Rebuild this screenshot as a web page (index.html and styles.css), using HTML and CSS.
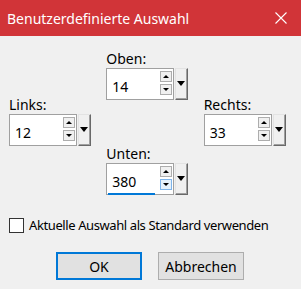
FILE: index.html
```html
<!DOCTYPE html>
<html lang="de">
<head>
    <meta charset="UTF-8">
    <title>Benutzerdefinierte Auswahl</title>
    <link rel="stylesheet" href="styles.css">
</head>
<body>
    <div class="titlebar">
        <span class="title">Benutzerdefinierte Auswahl</span>
        <span class="close">
            <svg width="12" height="12" viewBox="0 0 12 12"><path d="M0.5 0.5 L11.5 11.5 M11.5 0.5 L0.5 11.5" stroke="#fff" stroke-width="1.1" fill="none"/></svg>
        </span>
    </div>

    <!-- Ränder -->
    <div class="fields">
        <div class="col col-side">
            <div class="field">
                <span class="label">Links:</span>
                <div class="spin">
                    <div class="edit">
                        <span class="value">12</span>
                        <span class="arrows"><span class="up"></span><span class="down"></span></span>
                    </div>
                    <span class="drop"></span>
                </div>
            </div>
        </div>
        <div class="col col-mid">
            <div class="field">
                <span class="label">Oben:</span>
                <div class="spin">
                    <div class="edit">
                        <span class="value">14</span>
                        <span class="arrows"><span class="up"></span><span class="down"></span></span>
                    </div>
                    <span class="drop"></span>
                </div>
            </div>
            <div class="field">
                <span class="label">Unten:</span>
                <div class="spin">
                    <div class="edit focus">
                        <span class="value">380</span>
                        <span class="arrows"><span class="up"></span><span class="down hover"></span></span>
                    </div>
                    <span class="drop"></span>
                </div>
            </div>
        </div>
        <div class="col col-side col-right">
            <div class="field">
                <span class="label">Rechts:</span>
                <div class="spin">
                    <div class="edit">
                        <span class="value">33</span>
                        <span class="arrows"><span class="up"></span><span class="down"></span></span>
                    </div>
                    <span class="drop"></span>
                </div>
            </div>
        </div>
    </div>

    <label class="check"><span class="box"></span><span class="check-text">Aktuelle Auswahl als Standard verwenden</span></label>

    <div class="buttons">
        <button type="button" class="btn btn-default">OK</button>
        <button type="button" class="btn">Abbrechen</button>
    </div>
</body>
</html>
```

FILE: styles.css
```css
* {
    margin: 0;
    padding: 0;
    box-sizing: border-box;
}

body {
    font-family: "Noto Sans", "Open Sans", sans-serif;
    font-size: 14px;
    color: #000;
    background: #f0f0f0;
}

.titlebar {
    height: 36px;
    background: #d13438;
    color: #fff;
    display: flex;
    align-items: center;
    justify-content: space-between;
    padding: 0 14px 0 7px;
}

.title {
    font-size: 14px;
}

.close svg {
    display: block;
}

.fields {
    display: flex;
    padding-left: 9px;
}

.col {
    width: 98px;
    display: flex;
    flex-direction: column;
}

.col-side {
    padding-top: 60px;
}

.col-mid {
    padding-top: 14px;
    gap: 45px;
}

.label {
    display: block;
    height: 18px;
    line-height: 18px;
}

.spin {
    display: flex;
    gap: 1px;
}

.edit {
    position: relative;
    width: 68px;
    height: 32px;
    background: #fff;
    border: 1px solid #a0a0a0;
    display: flex;
    justify-content: space-between;
    padding: 2px 1px 0 5px;
}

.value {
    line-height: 28px;
    padding-top: 2px;
}

.edit.focus::after {
    content: "";
    position: absolute;
    left: 1px;
    bottom: -1px;
    width: 47px;
    height: 2px;
    background: #0078d7;
}

.arrows {
    display: flex;
    flex-direction: column;
    gap: 2px;
    width: 12px;
}

.up,
.down {
    position: relative;
    height: 11px;
    background: #f0f0f0;
    border: 1px solid #adadad;
}

.down.hover {
    background: #e5f1fb;
    border-color: #7eb4ea;
}

.up::before,
.down::before {
    content: "";
    position: absolute;
    left: 2px;
    top: 3px;
    border-left: 3px solid transparent;
    border-right: 3px solid transparent;
}

.up::before {
    border-bottom: 3px solid #000;
}

.down::before {
    border-top: 3px solid #000;
}

.drop {
    position: relative;
    width: 13px;
    height: 32px;
    background: #f0f0f0;
    border: 1px solid;
    border-color: #e3e3e3 #696969 #696969 #e3e3e3;
    box-shadow: inset -1px -1px #a0a0a0;
}

.drop::before {
    content: "";
    position: absolute;
    left: 1px;
    top: 12px;
    border-left: 4px solid transparent;
    border-right: 4px solid transparent;
    border-top: 5px solid #000;
}

.check {
    display: flex;
    align-items: center;
    gap: 5px;
    height: 18px;
    margin: 21px 0 0 9px;
}

.check .box {
    width: 15px;
    height: 15px;
    background: #fff;
    border: 1px solid #333;
}

.check-text {
    font-size: 13px;
    letter-spacing: -0.4px;
    white-space: nowrap;
}

.buttons {
    display: flex;
    gap: 16px;
    padding-left: 56px;
    margin-top: 18px;
}

.btn {
    width: 86px;
    height: 28px;
    font-family: inherit;
    font-size: 14px;
    color: #000;
    background: #e1e1e1;
    border: 1px solid #adadad;
}

.btn-default {
    border: 2px solid #0078d7;
}
```
